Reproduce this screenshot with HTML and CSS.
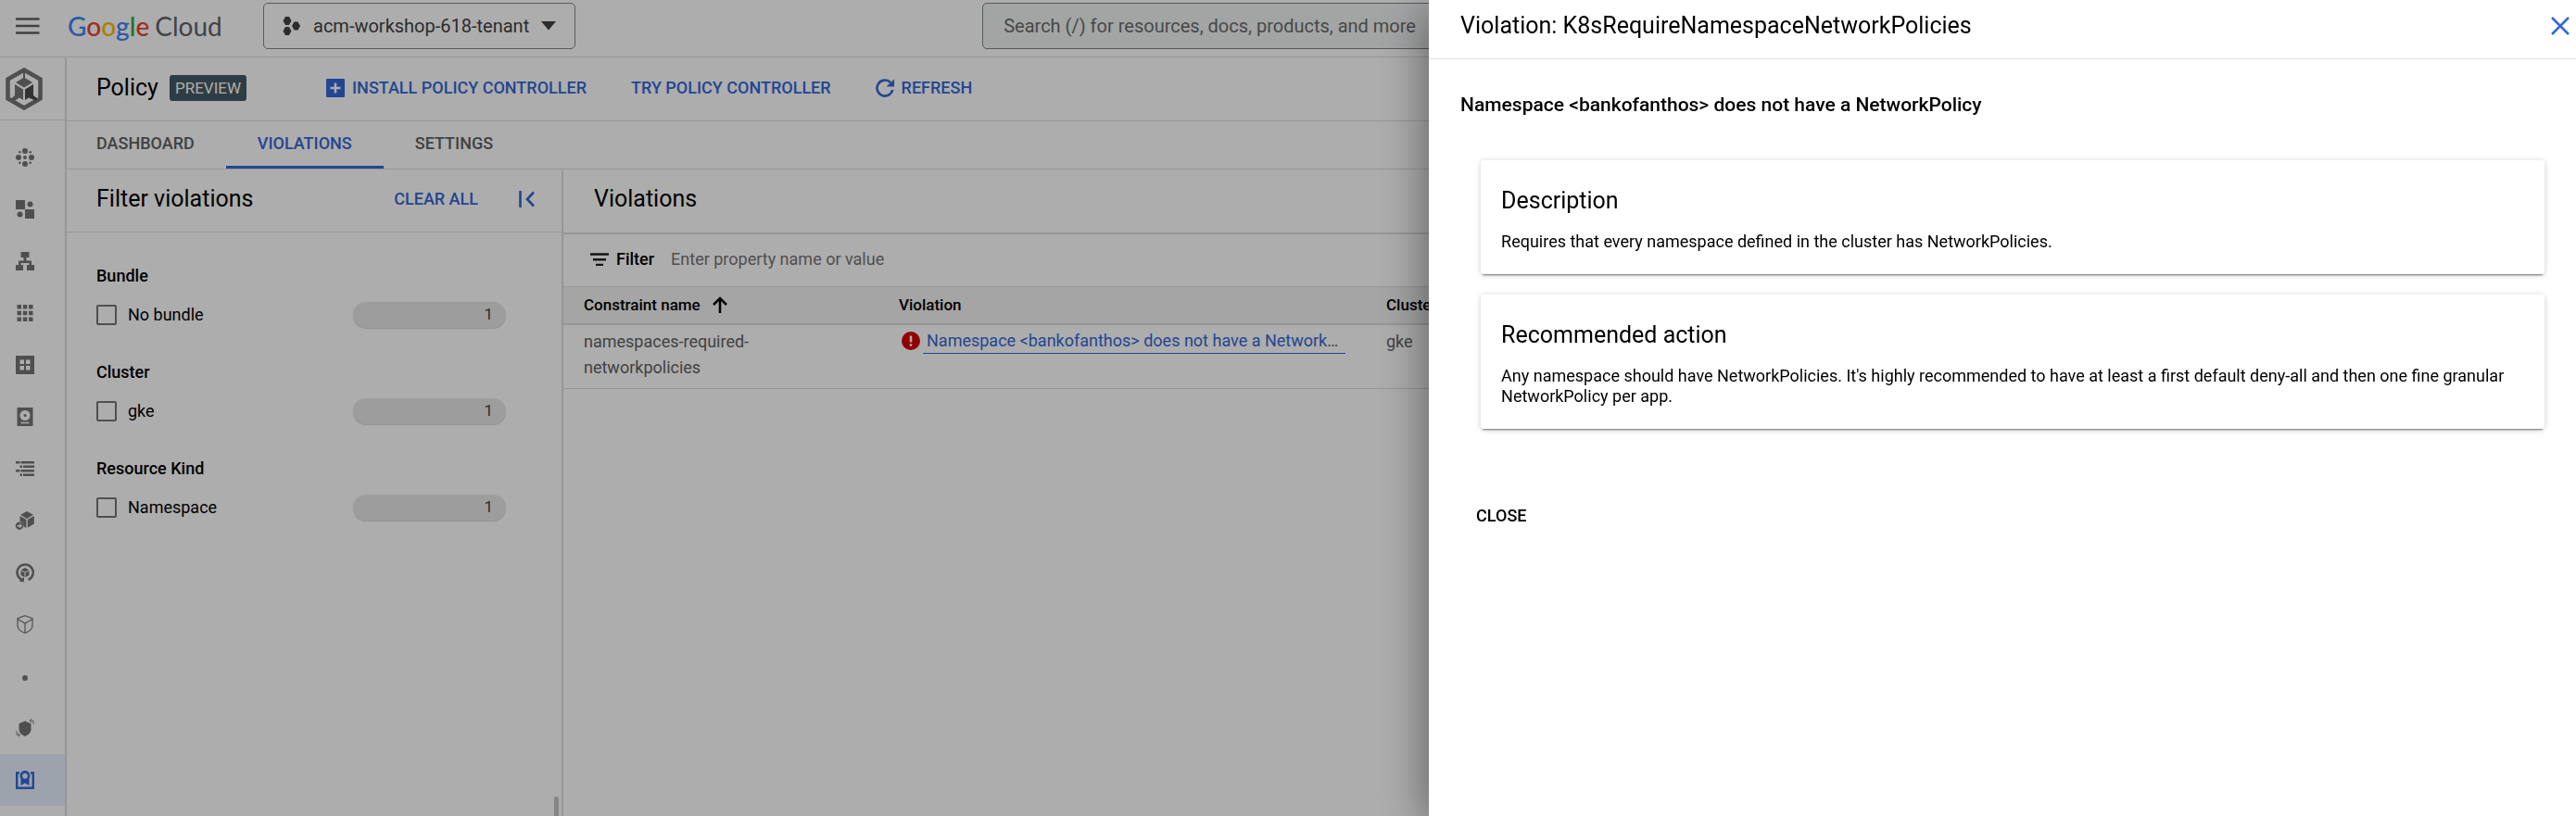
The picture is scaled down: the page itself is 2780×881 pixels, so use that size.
FILE: index.html
```html
<!DOCTYPE html>
<html lang="en">
<head>
<meta charset="utf-8">
<meta name="viewport" content="width=device-width, initial-scale=1">
<title>Policy – Google Cloud</title>
<link rel="stylesheet" href="styles.css">
</head>
<body>
<div class="app">
  <header class="topbar">
    <button class="icon-button menu-button" aria-label="Navigation menu">
      <svg width="26" height="18" viewBox="0 0 26 18"><path d="M0 1.500h25.500M0 9h25.500M0 16.500h25.500" stroke="#616161" stroke-width="2.600"/></svg>
    </button>
    <a class="brand" href="#" aria-label="Google Cloud"><span class="brand-google"><span class="g-blue">G</span><span class="g-red">o</span><span class="g-yellow">o</span><span class="g-blue">g</span><span class="g-green">l</span><span class="g-red">e</span></span><span>Cloud</span></a>
    <button class="project-picker">
      <svg width="20" height="20" viewBox="0 0 20 20" fill="#424242"><path d="M3 0h4l2.500 4.500L7 9H3L.5 4.500zM3 11h4l2.500 4.500L7 20H3L.5 15.500zM12.500 5.500h4L19 10l-2.500 4.500h-4L10 10z"/></svg>
      <span>acm-workshop-618-tenant</span>
      <svg width="16" height="10" viewBox="0 0 16 10"><path d="M0 0h16L8 9.500z" fill="#424242"/></svg>
    </button>
    <input class="search" type="search" aria-label="Search" placeholder="Search (/) for resources, docs, products, and more">
  </header>

  <div class="body">
    <nav class="rail" aria-label="Anthos">
      <a class="rail-logo" href="#" aria-label="Anthos">
        <svg width="40" height="46" viewBox="0 0 40 46"><path d="M20 2.500 37.500 12.500v21L20 43.500 2.500 33.500v-21z" fill="none" stroke="#757575" stroke-width="4.600"/><path d="M20 4v8" stroke="#757575" stroke-width="2"/><path d="M20 10.500 29 16l-9 5.500L11 16z" fill="#757575"/><path d="M10 18l9 5.500V35l-4-2.500-8 5-2.500-2.500L10 30z" fill="#757575"/><path d="M30 18l-9 5.500V35l4-2.500 8 3.500 1-3-4-3z" fill="#4c4c4c"/></svg>
      </a>
      <div class="rail-list">
        <a class="rail-item" href="#" aria-label="Service mesh"><svg class="ic" viewBox="0 0 20 20"><circle cx="10" cy="3" r="3"/><circle cx="10" cy="17" r="3"/><circle cx="3" cy="10" r="3"/><circle cx="17" cy="10" r="3"/><circle cx="10" cy="10" r="2"/><circle cx="4.300" cy="4.300" r="1.300"/><circle cx="15.700" cy="4.300" r="1.300"/><circle cx="4.300" cy="15.700" r="1.300"/><circle cx="15.700" cy="15.700" r="1.300"/></svg></a>
        <a class="rail-item" href="#" aria-label="Features"><svg class="ic" viewBox="0 0 20 20"><path d="M0 0h10v10H0zM10 10h10v10H10z"/><circle cx="15.500" cy="4.500" r="3"/><circle cx="4.500" cy="15.500" r="3"/></svg></a>
        <a class="rail-item" href="#" aria-label="Clusters"><svg class="ic" viewBox="0 0 20 20"><path d="M5.500 0h9v6h-3v3.500H17V14h3v6h-8v-6h2.500v-2h-9v2H8v6H0v-6h3V9.500h5.500V6h-3z"/></svg></a>
        <a class="rail-item" href="#" aria-label="Workloads"><svg class="ic" viewBox="0 0 20 20"><path d="M1.500 1h4.500v4.500H1.500zM7.800 1h4.500v4.500H7.800zM14 1h4.500v4.500H14zM1.500 7.800h4.500v4.500H1.500zM7.800 7.800h4.500v4.500H7.800zM14 7.800h4.500v4.500H14zM1.500 14.500h4.500V19H1.500zM7.800 14.500h4.500V19H7.800zM14 14.500h4.500V19H14z"/></svg></a>
        <a class="rail-item" href="#" aria-label="Applications"><svg class="ic" viewBox="0 0 20 20"><path fill-rule="evenodd" d="M0 0h20v20H0zM4.500 4.500V9H9V4.500zM11 4.500V9h4.500V4.500zM4.500 11v4.500H9V11zM11 11v4.500h4.500V11z"/></svg></a>
        <a class="rail-item" href="#" aria-label="Storage"><svg class="ic" viewBox="0 0 20 20"><path d="M1.500 0h17v20h-17z"/><circle cx="10" cy="8.500" r="5.500" fill="#fff"/><circle cx="10" cy="8.500" r="1.600"/><path d="M5.500 16.500h9" stroke="#fff" stroke-width="1.500"/></svg></a>
        <a class="rail-item" href="#" aria-label="Logs"><svg class="ic" viewBox="0 0 20 20"><path d="M0 2h4.500v2.600H0zM5.500 2H20v2.600H5.500zM4.500 6.500H7v2.600H4.500zM8 6.500h12v2.600H8zM0 11h4.500v2.600H0zM5.500 11H20v2.600H5.500zM4.500 15.500H7v2.600H4.500zM8 15.500h12v2.600H8z"/></svg></a>
        <a class="rail-item" href="#" aria-label="Migrate"><svg class="ic" viewBox="0 0 20 20"><path d="M12 0l7 3.700L12 8 5 3.700zM4.500 5l6.900 4v9l-3-1.700A4.500 4.500 0 0 0 4.500 11zM19.800 5v8.500l-7 4.300V9z"/><path fill-rule="evenodd" d="M4 11.500a4.200 4.200 0 1 0 .01 0zM4 13l3 2.800-3 2.800v-2H1.500v-1.500H4z"/></svg></a>
        <a class="rail-item" href="#" aria-label="Backup"><svg class="ic" viewBox="0 0 20 20"><path d="M7 18A8.600 8.600 0 1 1 13.500 17.900" fill="none" stroke="#757575" stroke-width="2.500"/><path d="M3.500 20l5.500.3V15z"/><path d="M10 5l4.300 2.200L10 9.400 5.700 7.200zM5.500 8.200l4 2v5l-4-2.200zM14.500 8.200l-4 2v5l4-2.200z"/></svg></a>
        <a class="rail-item" href="#" aria-label="Security"><svg class="ic" viewBox="0 0 20 20"><path d="M10 .7l8 3v7.300c0 4.500-3.500 7-8 8.500-4.500-1.500-8-4-8-8.500V3.700zM2 4.500 10 9l8-4.500M10 9v10.500" fill="none" stroke="#757575" stroke-width="1.200"/></svg></a>
        <a class="rail-item" href="#" aria-label="More"><svg class="ic" viewBox="0 0 20 20"><circle cx="10" cy="12" r="2.900"/></svg></a>
        <a class="rail-item" href="#" aria-label="Config"><svg class="ic" viewBox="0 0 20 20"><path d="M10 2.500l6.500 2.800v6c0 3.500-2.500 6-6.500 7.700-4-1.700-6.500-4.200-6.500-7.700v-6z"/><path d="M1 13v4.500h3M2.500 15.500l2 2-2 2M19 6V2h-3.500M17 0l-2 2 2 2" fill="none" stroke="#757575" stroke-width=".9"/></svg></a>
        <a class="rail-item rail-item-active" href="#" aria-label="Policy"><svg class="ic" viewBox="0 0 20 20"><path d="M4 2.500H1.200V18.800H18.800V2.500H16" fill="none" stroke="#3367d6" stroke-width="2.400"/><path fill="#3367d6" fill-rule="evenodd" d="M10 0a5.500 5.500 0 0 1 4.500 8.600V16L10 13.500 5.500 16V8.600A5.500 5.500 0 0 1 10 0zm0 2.700a3 3 0 1 0 .01 0z"/></svg></a>
      </div>
    </nav>

    <main class="main">
      <div class="page-head">
        <div class="page-name"><h1 class="title">Policy</h1><span class="badge">PREVIEW</span></div>
        <div class="page-actions">
          <button class="action"><svg width="20" height="20" viewBox="0 0 20 20"><rect width="20" height="20" rx="1" fill="#3367d6"/><path d="M10 4.500v11M4.500 10h11" stroke="#fff" stroke-width="2.600"/></svg>INSTALL POLICY CONTROLLER</button>
          <button class="action">TRY POLICY CONTROLLER</button>
          <button class="action"><svg width="20" height="20" viewBox="0 0 20 20"><path d="M18.300 12A8.500 8.500 0 1 1 16 4" fill="none" stroke="#3367d6" stroke-width="2.600"/><path d="M20 .5V8.500h-8.500z" fill="#3367d6"/></svg>REFRESH</button>
        </div>
      </div>
      <nav class="tabs" aria-label="Policy sections">
        <a class="tab" href="#">DASHBOARD</a>
        <a class="tab tab-active" href="#" aria-current="page">VIOLATIONS</a>
        <a class="tab" href="#">SETTINGS</a>
      </nav>
      <div class="columns">
        <section class="filters">
          <div class="filters-head">
            <h2 class="title">Filter violations</h2>
            <div class="filters-tools">
              <button class="action">CLEAR ALL</button>
              <button class="icon-button" aria-label="Collapse filters"><svg width="18" height="18" viewBox="0 0 18 18"><path d="M1.500 0v18M16 1.500 9 9l7 7.500" fill="none" stroke="#3367d6" stroke-width="2.600"/></svg></button>
            </div>
          </div>
          <div class="filters-body">
            <div class="filter-list">
              <fieldset class="facet"><legend>Bundle</legend><div class="facet-row"><label><input type="checkbox">No bundle</label><span class="count">1</span></div></fieldset>
              <fieldset class="facet"><legend>Cluster</legend><div class="facet-row"><label><input type="checkbox">gke</label><span class="count">1</span></div></fieldset>
              <fieldset class="facet"><legend>Resource Kind</legend><div class="facet-row"><label><input type="checkbox">Namespace</label><span class="count">1</span></div></fieldset>
            </div>
            <span class="scroll-thumb"></span>
          </div>
        </section>
        <section class="violations">
          <div class="violations-head"><h2 class="title">Violations</h2></div>
          <div class="filter-bar">
            <label class="filter-label" for="table-filter"><svg width="20" height="14" viewBox="0 0 20 14"><path d="M0 1.500h20M3 7.300h14M6 13h8" stroke="#212121" stroke-width="2.400"/></svg>Filter</label>
            <input id="table-filter" class="filter-input" type="text" placeholder="Enter property name or value">
          </div>
          <table class="grid">
            <colgroup><col class="col-name"><col class="col-violation"><col></colgroup>
            <thead><tr>
              <th scope="col"><span class="sorted">Constraint name<svg width="16" height="18" viewBox="0 0 16 18"><path d="M8 18V2M1 9l7-7 7 7" fill="none" stroke="#000" stroke-width="2.500"/></svg></span></th>
              <th scope="col">Violation</th><th scope="col">Cluster</th>
            </tr></thead>
            <tbody><tr>
              <td>namespaces-required-<wbr>networkpolicies</td>
              <td><span class="issue"><svg width="20" height="20" viewBox="0 0 20 20"><circle cx="10" cy="10" r="10" fill="#d50000"/><path d="M10 4.500v7M10 13.200v2.500" stroke="#fff" stroke-width="2.600"/></svg><span class="issue-text"><a href="#">Namespace &lt;bankofanthos&gt; does not have a NetworkPolicy</a></span></span></td>
              <td>gke</td>
            </tr></tbody>
          </table>
        </section>
      </div>
    </main>
  </div>
</div>

<div class="scrim"></div>
<aside class="drawer" role="dialog" aria-labelledby="drawer-title">
  <header class="drawer-head">
    <h2 class="title" id="drawer-title">Violation: K8sRequireNamespaceNetworkPolicies</h2>
    <button class="icon-button" aria-label="Close panel"><svg width="20" height="20" viewBox="0 0 20 20"><path d="M1 1l18 18M19 1 1 19" stroke="#3367d6" stroke-width="2.500"/></svg></button>
  </header>
  <div class="drawer-body">
    <h3 class="summary">Namespace &lt;bankofanthos&gt; does not have a NetworkPolicy</h3>
    <div class="cards">
      <section class="card"><h4 class="title">Description</h4><p>Requires that every namespace defined in the cluster has NetworkPolicies.</p></section>
      <section class="card"><h4 class="title">Recommended action</h4><p>Any namespace should have NetworkPolicies. It's highly recommended to have at least a first default deny-all and then one fine granular NetworkPolicy per app.</p></section>
    </div>
    <button class="close-button">CLOSE</button>
  </div>
</aside>
</body>
</html>
```
FILE: styles.css
```css
* { box-sizing: border-box; }
body { margin: 0; font: 400 18px/28px Roboto, "Liberation Sans", sans-serif; color: #000; background: #fff; overflow: hidden; }
h1, h2, h3, h4, p, fieldset { margin: 0; padding: 0; border: 0; font-weight: 400; }
button { margin: 0; padding: 0; border: 0; background: none; font: inherit; color: inherit; cursor: pointer; }
a { color: inherit; text-decoration: none; }
svg { display: block; flex: none; }

.app { display: flex; flex-direction: column; min-height: 100vh; }
.title { font-size: 25px; line-height: 32px; white-space: nowrap; }
.icon-button { display: flex; }

.topbar { display: flex; align-items: center; height: 62px; padding: 0 17px 6px; border-bottom: 1px solid #dedede; }
.brand { display: flex; gap: 6px; width: 211px; margin-left: 30px; font: 400 28px/36px Lato, Roboto, sans-serif; color: #5f6368; }
.brand-google { font-weight: 500; }
.g-blue { color: #4285f4; }
.g-red { color: #ea4335; }
.g-yellow { color: #fbbc04; }
.g-green { color: #34a853; }
.project-picker { display: flex; align-items: center; gap: 13px; height: 50px; padding: 0 20px; border: 1px solid #80868b; border-radius: 5px; font-size: 20px; color: #424242; white-space: nowrap; }
.search { flex: 1; height: 50px; margin-left: 439px; padding: 0 22px; border: 1px solid #80868b; border-radius: 5px; background: #f1f3f4; font: 400 20px Roboto, sans-serif; }
.search::placeholder { color: #6b6b6b; opacity: 1; }

.body { display: flex; flex: 1; }
.rail { flex: none; width: 72px; border-right: 2px solid #dedede; }
.rail-logo { display: flex; height: 68px; padding: 11px 6px; border-bottom: 1px solid #dedede; }
.rail-list { padding-top: 12px; }
.rail-item { display: flex; align-items: center; height: 56px; padding-left: 17px; }
.rail-item-active { background: #e8f0fe; }
.ic { width: 20px; height: 20px; fill: #757575; overflow: visible; }

.main { display: flex; flex: 1; flex-direction: column; min-width: 0; }
.page-head { display: flex; align-items: center; gap: 86px; height: 69px; padding: 0 32px 2px; border-bottom: 1px solid #dedede; }
.page-name { display: flex; align-items: center; gap: 12px; }
.badge { padding: 0 6px; border-radius: 3px; background: #455a64; color: #fff; font-size: 17px; }
.page-actions { display: flex; gap: 48px; }
.action { display: flex; align-items: center; gap: 8px; font-weight: 500; color: #3367d6; white-space: nowrap; }

.tabs { display: flex; height: 52px; border-bottom: 1px solid #dedede; }
.tab { padding: 10px 34px 0; border-bottom: 3px solid transparent; font-weight: 500; color: #616161; }
.tab:first-child { padding-left: 32px; }
.tab-active { color: #3367d6; border-color: #3367d6; }

.columns { display: flex; flex: 1; }
.filters { display: flex; flex: none; flex-direction: column; width: 536px; border-right: 2px solid #dedede; }
.filters-head { display: flex; align-items: center; justify-content: space-between; height: 68px; padding: 0 28px 4px 32px; border-bottom: 1px solid #dedede; }
.filters-tools { display: flex; align-items: center; gap: 44px; }
.filters-body { display: flex; flex: 1; justify-content: space-between; padding: 33px 3px 0 32px; }
.filter-list { display: flex; flex-direction: column; gap: 32px; width: 442px; }
.facet legend { padding: 0; font-weight: 500; }
.facet-row { display: flex; align-items: center; justify-content: space-between; height: 44px; padding-top: 12px; }
.facet label { display: flex; align-items: center; gap: 12px; }
.facet input { appearance: none; width: 22px; height: 22px; margin: 0; border: 2px solid #757575; border-radius: 2px; }
.count { width: 165px; padding: 0 14px 2px; border-radius: 14px; background: #e8e8e8; box-shadow: 0 1px 1px #d6d6d6; font-size: 17px; line-height: 26px; color: #424242; text-align: right; }
.scroll-thumb { align-self: flex-end; width: 5px; height: 21px; border-radius: 3px 3px 0 0; background: #c4c4c4; }

.violations { flex: 1; min-width: 0; }
.violations-head { display: flex; align-items: center; height: 70px; padding: 0 33px 4px; border-bottom: 2px solid #dedede; }
.filter-bar { display: flex; align-items: center; gap: 18px; height: 56px; padding: 0 29px 2px; }
.filter-label { display: flex; align-items: center; gap: 8px; font-weight: 500; }
.filter-input { flex: 1; padding: 0; border: 0; background: none; font: inherit; }
.filter-input::placeholder { color: #757575; opacity: 1; }
.grid { width: 100%; border-collapse: collapse; table-layout: fixed; }
.col-name { width: 340px; }
.col-violation { width: 526px; }
.grid th { height: 40px; padding: 0 22px; border-top: 1px solid #dedede; border-bottom: 2px solid #dedede; background: #f3f3f3; font-size: 17px; font-weight: 500; text-align: left; }
.grid td { padding: 4px 22px 8px; border-bottom: 1px solid #dedede; color: #616161; vertical-align: top; }
.sorted { display: flex; align-items: center; gap: 13px; }
.issue { display: flex; align-items: center; gap: 3px; padding-left: 3px; }
.issue-text { flex: 1; min-width: 0; padding-left: 4px; border-bottom: 1px solid #3367d6; line-height: 26px; overflow: hidden; text-overflow: ellipsis; white-space: nowrap; }
.issue-text a { color: #3367d6; }

.scrim { position: fixed; inset: 0; background: rgba(0, 0, 0, .32); }
.drawer { position: fixed; inset: 0 0 0 auto; width: 44.53%; background: #fff; box-shadow: 0 11px 50px rgba(0, 0, 0, .5); }
.drawer-head { display: flex; align-items: center; justify-content: space-between; height: 64px; padding: 0 7px 8px 34px; border-bottom: 1px solid #dedede; }
.drawer-body { padding: 34px; }
.summary { font-size: 21px; font-weight: 500; line-height: 30px; }
.cards { display: flex; flex-direction: column; gap: 22px; padding: 45px 0 80px 22px; }
.card { padding: 28px 22px 24px; border-radius: 3px; box-shadow: 0 3px 2px -2px rgba(0, 0, 0, .5), 0 1px 6px rgba(0, 0, 0, .2); }
.card p { margin-top: 17px; line-height: 22px; }
.close-button { margin-left: 17px; font-weight: 500; }
```
